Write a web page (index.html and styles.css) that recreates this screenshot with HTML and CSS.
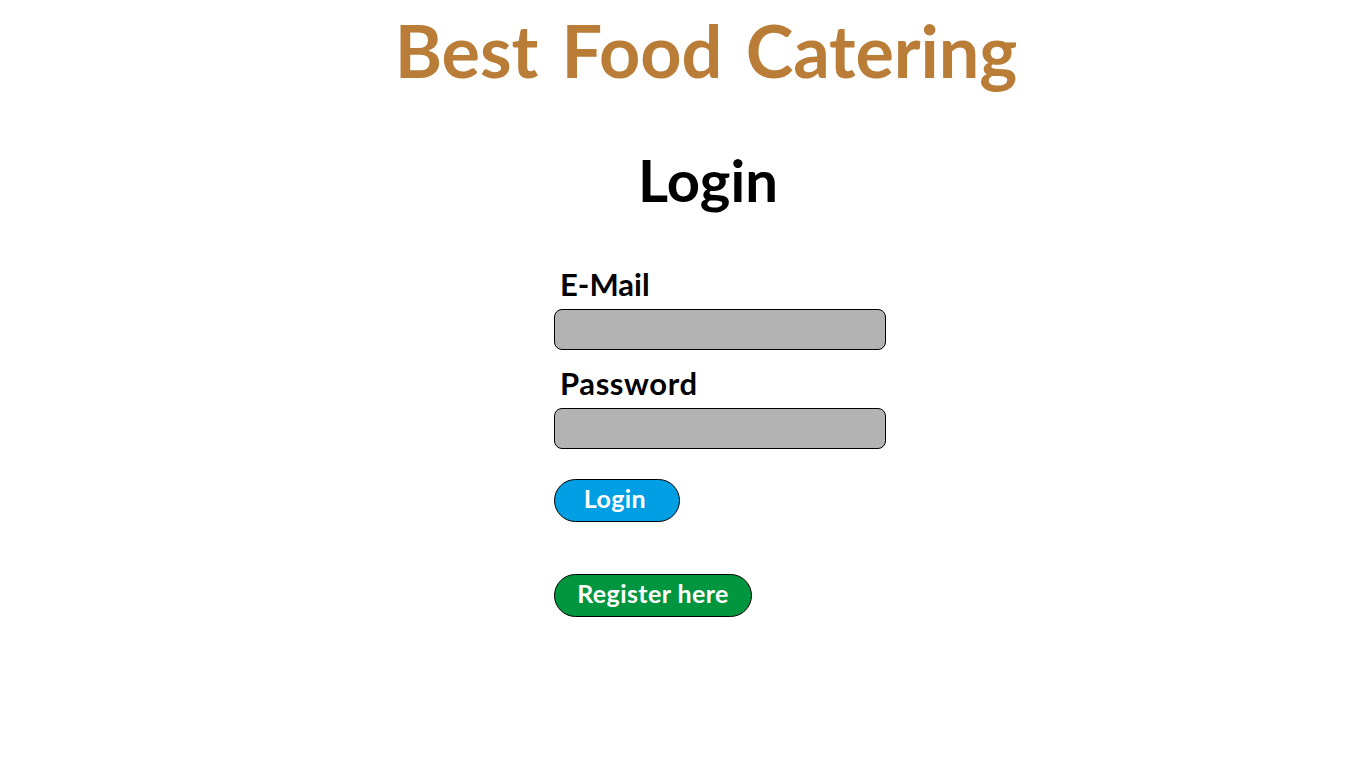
FILE: index.html
```html
<!DOCTYPE html>
<html lang="en">
<head>
<meta charset="utf-8">
<title>Best Food Catering - Login</title>
<link rel="stylesheet" href="styles.css">
</head>
<body>
<header class="site-header">
  <h1 class="brand">Best Food Catering</h1>
</header>
<main class="page">
  <h2 class="page-title">Login</h2>
  <form class="login-form">
    <label class="field-label" for="email">E-Mail</label>
    <input class="field-input" id="email" type="email">
    <label class="field-label" for="password">Password</label>
    <input class="field-input" id="password" type="password">
    <button class="btn btn-login" type="button">Login</button>
    <button class="btn btn-register" type="button">Register here</button>
  </form>
</main>
</body>
</html>
```
FILE: styles.css
```css
html, body {
  margin: 0;
  padding: 0;
  background: #ffffff;
}
body {
  font-family: "Lato", "Open Sans", sans-serif;
  font-weight: 700;
  color: #000;
}
.site-header {
  display: flex;
  justify-content: center;
  padding-left: 46px;
}
.brand {
  margin: 10px 0 0;
  font-size: 72px;
  line-height: 80px;
  font-weight: 700;
  color: #b97d37;
  letter-spacing: -0.1px;
  word-spacing: 6px;
}
.page {
  display: flex;
  flex-direction: column;
  align-items: center;
}
.page-title {
  margin: 55px 0 0;
  padding-left: 50px;
  font-size: 58px;
  line-height: 70px;
  font-weight: 700;
}
.login-form {
  display: flex;
  flex-direction: column;
  align-items: flex-start;
  width: 332px;
  margin: 49px 0 0 74px;
}
.field-label {
  padding-left: 6px;
  font-size: 31px;
  line-height: 40px;
  margin-bottom: 5px;
}
.field-label[for="password"] {
  letter-spacing: 0.6px;
}
.field-input {
  box-sizing: border-box;
  width: 332px;
  height: 41px;
  margin: 0 0 13px;
  border: 1px solid #000;
  border-radius: 8px;
  background: #b3b3b3;
  outline: none;
}
.btn {
  box-sizing: border-box;
  height: 43px;
  border: 1px solid #000;
  border-radius: 22px;
  color: #fff;
  font-family: inherit;
  font-weight: 700;
  font-size: 25px;
  letter-spacing: 0.4px;
  line-height: 1;
  padding: 0 0 4px;
  cursor: pointer;
}
.btn-login {
  width: 126px;
  margin-top: 17px;
  padding-right: 4px;
  background: #009ee3;
}
.btn-register {
  width: 198px;
  margin-top: 52px;
  background: #00963f;
}
```
